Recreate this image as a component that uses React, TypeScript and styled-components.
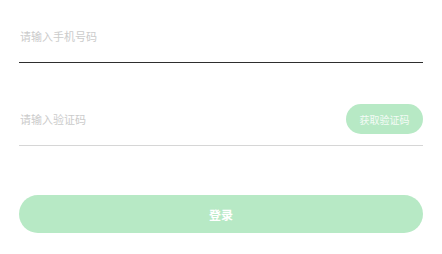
import React from "react";
import styled, { createGlobalStyle } from "styled-components";

const GlobalStyle = createGlobalStyle`
  html, body {
    margin: 0;
    padding: 0;
    background: #ffffff;
  }
  * {
    box-sizing: border-box;
  }
`;

const Page = styled.div`
  padding: 21px 19px 0;
  font-family: "Noto Sans CJK SC", "Noto Sans", sans-serif;
  display: flex;
  flex-direction: column;
`;

const Field = styled.div<{ $active?: boolean; $gap?: number }>`
  display: flex;
  align-items: center;
  height: 30px;
  box-sizing: content-box;
  padding-bottom: 11px;
  margin-top: ${({ $gap }) => $gap ?? 0}px;
  border-bottom: 1px solid ${({ $active }) => ($active ? "#2e2e2e" : "#d6d6d6")};
`;

const Input = styled.input`
  flex: 1;
  min-width: 0;
  border: none;
  outline: none;
  background: transparent;
  padding: 0 1px;
  font-family: inherit;
  font-size: 11px;
  color: #333;

  &::placeholder {
    color: #cbcbcb;
  }
`;

const CodeButton = styled.button`
  flex: none;
  width: 77px;
  height: 30px;
  border: none;
  border-radius: 15px;
  background: #b7e9c5;
  color: #f4fbf6;
  font-family: inherit;
  font-size: 10px;
  padding: 0;
`;

const LoginButton = styled.button`
  margin-top: 49px;
  height: 38px;
  border: none;
  border-radius: 19px;
  background: #b7e9c5;
  color: #ffffff;
  font-family: inherit;
  font-size: 12px;
  font-weight: 700;
`;

export default function App() {
  return (
    <>
      <GlobalStyle />
      <Page>
        <Field $active>
          <Input placeholder="请输入手机号码" />
        </Field>
        <Field $gap={41}>
          <Input placeholder="请输入验证码" />
          <CodeButton>获取验证码</CodeButton>
        </Field>
        <LoginButton>登录</LoginButton>
      </Page>
    </>
  );
}
